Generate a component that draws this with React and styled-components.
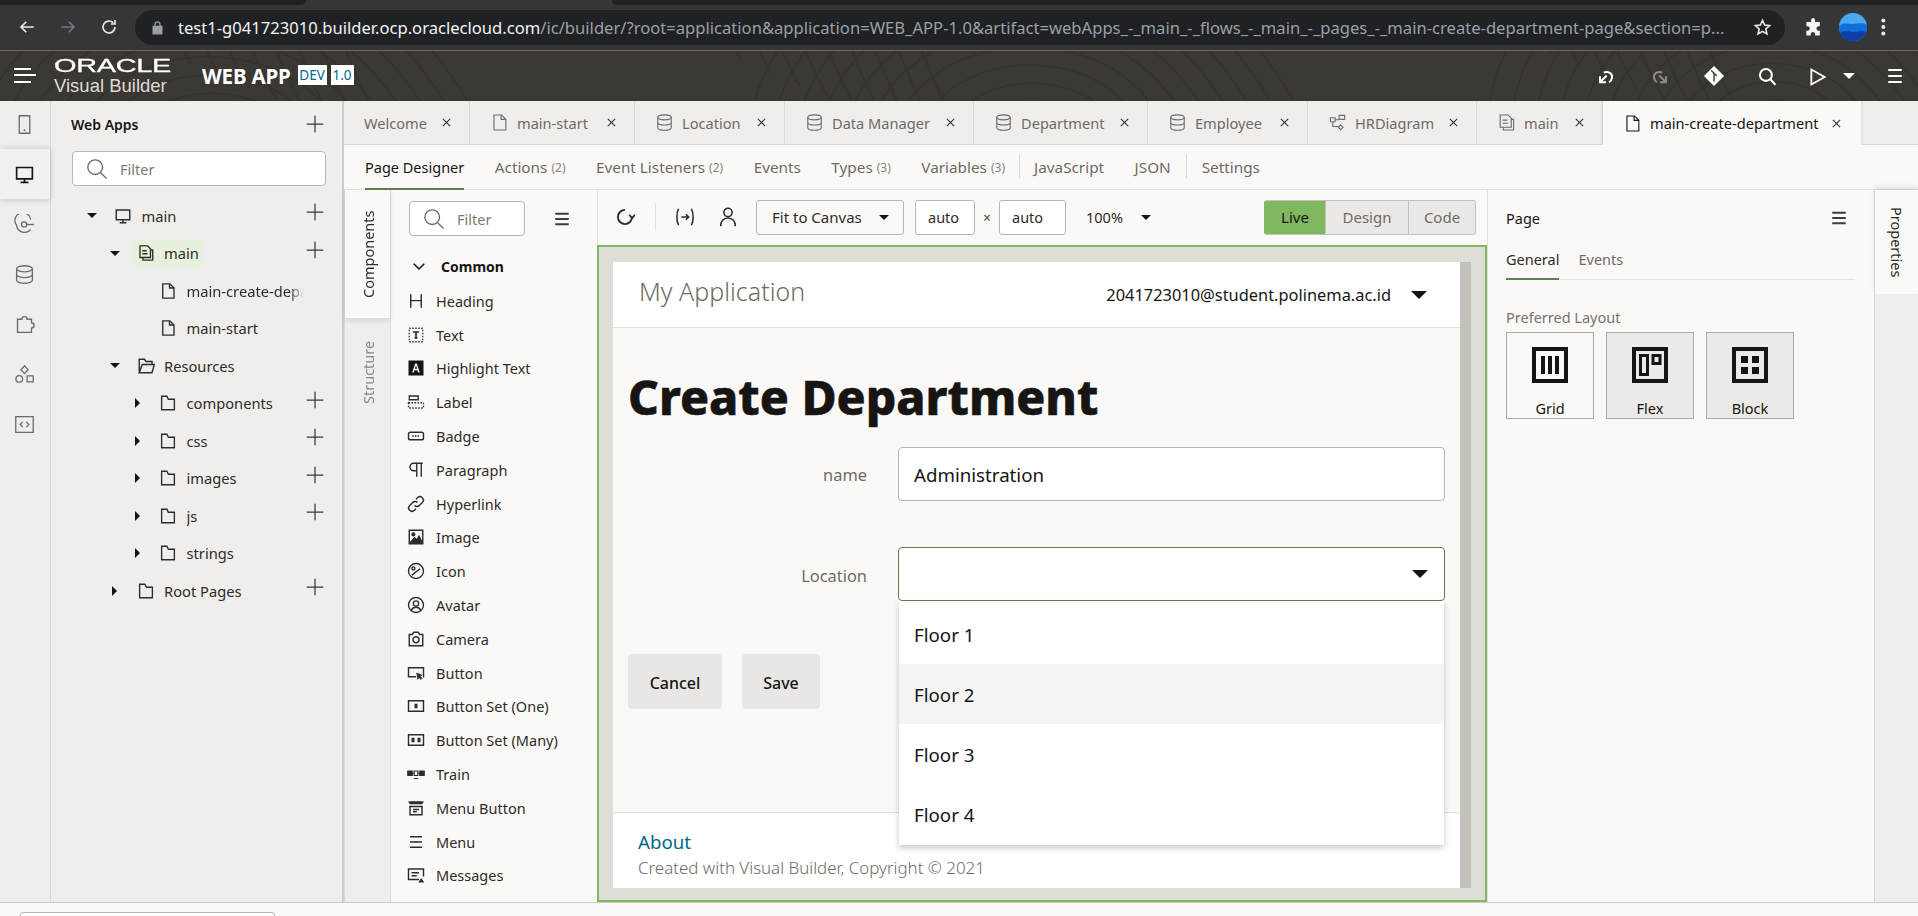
import React from "react";
import styled, { createGlobalStyle } from "styled-components";

const Global = createGlobalStyle`
  html, body { margin: 0; height: 100%; background: #fbf9f8; }
  #root { height: 100%; }
  * { box-sizing: border-box; }
  body { font-family: "Noto Sans", "Open Sans", sans-serif; color: #161513; }
`;

const Ink = "#161513";
const Muted = "#6f6a65";
const Paper = "#fbf9f8";
const Shell = "#f0eeec";
const Rule = "#dcd9d5";
const Green = "#7fb85f";

const Page = styled.div`
  height: 916px;
  display: flex;
  flex-direction: column;
  overflow: hidden;
`;

/* ---------- icons ---------- */
const SvgBase = styled.svg`
  flex: none;
  display: block;
  width: ${(p) => p.$s || 18}px;
  height: ${(p) => p.$s || 18}px;
  color: ${(p) => p.$c || "currentColor"};
`;
const I = ({ s, c, sw = 1.6, children, vb = "0 0 24 24" }) => (
  <SvgBase $s={s} $c={c} viewBox={vb} fill="none" stroke="currentColor" strokeWidth={sw}>
    {children}
  </SvgBase>
);
const PlusIcon = (p) => (<I s={20} sw={1.5} {...p}><path d="M12 2v20M2 12h20" /></I>);
const XIcon = (p) => (<I s={11} sw={2.2} {...p}><path d="M4 4l16 16M20 4L4 20" /></I>);
const PageIcon = (p) => (<I sw={1.8} {...p}><path d="M5 2.5h9.5L20 8v13.5H5zM14 2.5V8h6" /></I>);
const DbIcon = (p) => (
  <I {...p}>
    <ellipse cx="12" cy="5.5" rx="8.5" ry="3.2" />
    <path d="M3.5 5.5v13c0 1.8 3.8 3.2 8.5 3.2s8.5-1.4 8.5-3.2v-13M3.5 12c0 1.8 3.8 3.2 8.5 3.2s8.5-1.4 8.5-3.2" />
  </I>
);
const DiagramIcon = (p) => (
  <I {...p}>
    <path d="M14 3h7v5h-7zM3 6h6v5H3zM6 11v6h7M9 8.5h5" />
    <path d="M16 15l3 3-3 3-3-3z" />
  </I>
);
const MainIcon = (p) => (
  <I sw={1.8} {...p}>
    <path d="M4 2.5h10l4 4V18H4zM7 9h6M7 13h7M18 8h3v13.5H8V18" />
  </I>
);
const MonitorIcon = (p) => (<I {...p} sw={1.9}><path d="M3 4h18v13H3zM12 17v4M7.5 21h9" /></I>);
const FolderIcon = (p) => (<I {...p} sw={1.8}><path d="M3.5 21V3h7l2 4h8v14z" /></I>);
const OpenFolderIcon = (p) => (<I {...p} sw={1.9}><path d="M3 21V3h7l2 3h8v4M3 21l4-11h16l-3 11z" /></I>);
const SearchIcon = ({ s = 22, c = "#6f6a65", sw = 1.5 }) => (
  <I s={s} c={c} sw={sw}><circle cx="10" cy="10" r="8" /><path d="M16 16l6.5 6.5" /></I>
);
const BurgerIcon = ({ s = 18, c = "#3f3b38", sw = 2.4 }) => (
  <I s={s} c={c} sw={sw}><path d="M3 5h18M3 12h18M3 19h18" /></I>
);

const Arrow = styled.span`
  flex: none;
  width: 0;
  height: 0;
  display: block;
  ${(p) =>
    p.$dir === "right"
      ? `border-top: ${p.$u}px solid transparent; border-bottom: ${p.$u}px solid transparent; border-left: ${p.$u}px solid ${p.$c};`
      : `border-left: ${p.$u}px solid transparent; border-right: ${p.$u}px solid transparent; border-top: ${p.$u}px solid ${p.$c};`}
`;

/* ---------- browser chrome ---------- */
const TabEdge = styled.div`
  height: 5px;
  background: #35363a;
  display: flex;
  gap: 306px;
`;
const TabEdgePart = styled.div`
  background: #202124;
  width: ${(p) => (p.$grow ? "auto" : "306px")};
  flex: ${(p) => (p.$grow ? 1 : "none")};
  border-radius: ${(p) => (p.$grow ? "0 0 0 8px" : "0 0 8px 0")};
`;
const BrowserBar = styled.div`
  height: 46px;
  background: #35363a;
  border-bottom: 1px solid #6a6b6d;
  display: flex;
  align-items: center;
  padding-bottom: 1px;
`;
const NavButtons = styled.div`
  width: 135px;
  flex: none;
  display: flex;
  align-items: center;
  padding-left: 18px;
  gap: 23px;
`;
const UrlBar = styled.div`
  width: 1650px;
  height: 35px;
  flex: none;
  border-radius: 18px;
  background: #202124;
  display: flex;
  align-items: center;
  padding-left: 15px;
`;
const UrlText = styled.div`
  width: 1562px;
  margin: 0 13px;
  font-size: 16.6px;
  white-space: nowrap;
  overflow: hidden;
  color: #9aa0a6;
`;
const UrlHost = styled.span`
  color: #f1f3f4;
`;
const BrowserRight = styled.div`
  display: flex;
  align-items: center;
  margin-left: 19px;
`;
const Avatar = styled.svg`
  width: 28px;
  height: 28px;
  margin: 0 -2px 0 16px;
`;

/* ---------- app header ---------- */
const Header = styled.header`
  position: relative;
  height: 50px;
  flex: none;
  background: #3b3733;
  display: flex;
  align-items: center;
  padding-left: 14px;
  overflow: hidden;
  color: #fff;
`;
const Waves = styled.svg`
  position: absolute;
  inset: 0;
  width: 100%;
  height: 100%;
`;
const HeaderSlot = styled.div`
  position: relative;
  display: flex;
  align-items: center;
`;
const Logo = styled.div`
  width: 126px;
  margin-left: 18px;
  height: 40px;
  font-family: "Liberation Sans", sans-serif;
`;
const LogoMark = styled.div`
  font-size: 19px;
  line-height: 18px;
  margin-top: 1px;
  transform: scaleX(1.52);
  transform-origin: left center;
  -webkit-text-stroke: 0.3px #fff;
  letter-spacing: -0.2px;
`;
const LogoSub = styled.div`
  font-size: 18.5px;
  line-height: 21px;
  color: #dedcda;
`;
const AppName = styled.div`
  margin-left: 22px;
  font-size: 20.5px;
  font-weight: 700;
  letter-spacing: -0.2px;
`;
const VersionTag = styled.span`
  margin-left: ${(p) => p.$ml}px;
  width: ${(p) => p.$w}px;
  height: 20px;
  background: #fff;
  color: #00688c;
  font-size: 13.5px;
  line-height: 20px;
  text-align: center;
  margin-bottom: 3px;
`;
const HeaderTools = styled.div`
  position: relative;
  margin-left: auto;
  display: flex;
  align-items: center;
  height: 100%;
`;
const HeaderTool = styled.span`
  position: absolute;
  left: ${(p) => p.$x}px;
  top: ${(p) => p.$y}px;
  display: block;
`;

/* ---------- shell ---------- */
const Body = styled.div`
  flex: 1;
  min-height: 0;
  display: flex;
  background: ${Shell};
  border-bottom: 1px solid #cfccc7;
`;
const Rail = styled.nav`
  width: 51px;
  flex: none;
  border-right: 1px solid ${Rule};
  display: flex;
  flex-direction: column;
`;
const RailItem = styled.div`
  height: 50px;
  display: flex;
  align-items: center;
  justify-content: center;
  padding-right: 1px;
  margin-top: ${(p) => (p.$first ? "-2px" : 0)};
  color: ${(p) => (p.$active ? Ink : Muted)};
  background: ${(p) => (p.$active ? "#f3f1ef" : "transparent")};
  box-shadow: ${(p) => (p.$active ? "0 2px 6px rgba(0,0,0,.13), 0 -2px 6px rgba(0,0,0,.07)" : "none")};
`;
const NavPanel = styled.aside`
  width: 293px;
  flex: none;
  border-right: 2px solid #cfccc7;
  display: flex;
  flex-direction: column;
`;
const NavHead = styled.div`
  height: 50px;
  padding: 0 17px 4px 20px;
  display: flex;
  align-items: center;
  justify-content: space-between;
  font-size: 14px;
  font-weight: 600;
`;
const Filter = styled.div`
  height: 35px;
  width: ${(p) => p.$w}px;
  flex: none;
  margin-left: ${(p) => p.$ml || 0}px;
  background: #fff;
  border: 1px solid #b9b6b1;
  border-radius: 4px;
  display: flex;
  align-items: center;
  padding-left: 13px;
  gap: 12px;
  font-size: 14.5px;
  color: #7d7873;
`;
const Tree = styled.div`
  padding-top: 11px;
`;
const TreeRow = styled.div`
  height: 37.5px;
  display: flex;
  align-items: center;
  padding-left: ${(p) => 33 + p.$depth * 22.5}px;
  font-size: 14.7px;
  color: #2f2b28;
`;
const ArrowSlot = styled.span`
  width: 16px;
  flex: none;
  margin-right: 14px;
  display: flex;
  justify-content: center;
`;
const TreeLabel = styled.span`
  display: flex;
  align-items: center;
  gap: 9.5px;
  height: 28px;
  margin-left: -4px;
  padding: 0 4px;
  background: ${(p) => (p.$sel ? "#e6f2de" : "transparent")};
`;
const Clipped = styled.span`
  display: block;
  white-space: nowrap;
  overflow: hidden;
  max-width: ${(p) => p.$max || 200}px;
  ${(p) => p.$max && "mask-image: linear-gradient(to right, #000 88%, transparent);"}
`;
const TreeAdd = styled.span`
  margin-left: auto;
  margin-right: 17px;
  margin-bottom: 7px;
  color: #2c3b45;
`;

/* ---------- main column ---------- */
const Main = styled.main`
  flex: 1;
  min-width: 0;
  display: flex;
  flex-direction: column;
`;
const Tabs = styled.div`
  height: 44px;
  flex: none;
  display: flex;
  background: ${Shell};
`;
const Tab = styled.div`
  width: ${(p) => p.$w}px;
  flex: none;
  padding-left: 20px;
  display: flex;
  align-items: center;
  font-size: 14.6px;
  color: ${(p) => (p.$active ? Ink : Muted)};
  background: ${(p) => (p.$active ? Paper : "transparent")};
  border-right: 1px solid ${(p) => (p.$active ? "transparent" : Rule)};
  border-bottom: ${(p) => (p.$active ? "none" : `1px solid ${Rule}`)};
  box-shadow: ${(p) => (p.$active ? "0 -1px 4px rgba(0,0,0,.12)" : "none")};
`;
const TabFiller = styled.div`
  flex: 1;
  border-bottom: 1px solid ${Rule};
`;
const TabLabel = styled.span`
  margin-left: ${(p) => (p.$icon ? 8 : 0)}px;
  white-space: nowrap;
`;
const TabClose = styled.span`
  margin-left: auto;
  margin-right: ${(p) => p.$mr}px;
  color: #2f2b28;
`;
const SubTabs = styled.div`
  height: 45px;
  flex: none;
  display: flex;
  gap: 30.5px;
  padding-left: 21px;
  background: ${Paper};
  border-bottom: 1px solid #e4e1dd;
`;
const SubTab = styled.div`
  display: flex;
  align-items: center;
  gap: 4px;
  font-size: ${(p) => (p.$active ? 14.5 : 15.3)}px;
  padding-top: 1px;
  color: ${(p) => (p.$active ? Ink : Muted)};
  border-bottom: 2px solid ${(p) => (p.$active ? "#5f7d4f" : "transparent")};
  height: 45px;
`;
const Count = styled.span`
  font-size: 12px;
  color: #8a8580;
`;
const SubDivider = styled.span`
  width: 1px;
  height: 24px;
  margin: 9px ${(p) => (p.$tight ? -16.5 : -15.5)}px 0;
  background: #dcd9d5;
`;
const Workspace = styled.div`
  flex: 1;
  min-height: 0;
  display: flex;
  background: ${Paper};
`;
const SideStrip = styled.div`
  width: ${(p) => p.$w}px;
  flex: none;
  background: ${Shell};
  border-left: 1px solid ${Rule};
  border-right: ${(p) => (p.$right ? "none" : `1px solid ${Rule}`)};
  display: flex;
  flex-direction: column;
`;
const VTab = styled.div`
  height: ${(p) => p.$h}px;
  writing-mode: vertical-rl;
  ${(p) => (p.$right ? "" : "transform: rotate(180deg);")}
  display: flex;
  align-items: center;
  justify-content: center;
  font-size: 14.5px;
  color: ${(p) => (p.$active ? "#2f2b28" : "#8a8580")};
  background: ${(p) => (p.$active ? Paper : "transparent")};
  box-shadow: ${(p) => (p.$active ? "0 -3px 5px rgba(0,0,0,.1)" : "none")};
`;
const Palette = styled.section`
  width: 206px;
  flex: none;
  padding-top: 11px;
  background: ${Paper};
`;
const PaletteHead = styled.div`
  display: flex;
  align-items: center;
  height: 35px;
`;
const PaletteBurger = styled.span`
  margin-left: 28px;
`;
const GroupTitle = styled.div`
  height: 36px;
  margin-top: 12px;
  padding-left: 21px;
  display: flex;
  align-items: center;
  gap: 15px;
  font-size: 14px;
  font-weight: 700;
`;
const CompRow = styled.div`
  height: 33.8px;
  display: flex;
  align-items: center;
  gap: 11px;
  padding-left: 16px;
  font-size: 14.5px;
  color: #2f2b28;
  white-space: nowrap;
`;

/* ---------- centre ---------- */
const Centre = styled.section`
  width: 890px;
  flex: none;
  display: flex;
  flex-direction: column;
`;
const Toolbar = styled.div`
  height: 55px;
  flex: none;
  display: flex;
  align-items: center;
  padding-left: 17px;
  padding-bottom: 1px;
  font-size: 14.5px;
  border-left: 1px solid #e4e1dd;
`;
const ToolDivider = styled.span`
  width: 1px;
  height: 28px;
  margin: 0 18px 0 20px;
  background: #e4e1dd;
`;
const ToolIcon = styled.span`
  margin-right: ${(p) => p.$mr || 0}px;
  display: block;
`;
const ToolBox = styled.div`
  height: 35px;
  width: ${(p) => p.$w}px;
  flex: none;
  margin-left: ${(p) => p.$ml || 0}px;
  border: 1px solid #b9b6b1;
  border-radius: 3px;
  background: ${(p) => (p.$white ? "#fff" : Paper)};
  display: flex;
  align-items: center;
  padding-left: ${(p) => p.$pl || 12}px;
  color: #2f2b28;
`;
const FitLabel = styled.span`
  font-size: 15px;
`;
const BoxArrow = styled.span`
  margin-left: auto;
  margin-right: 14px;
`;
const Times = styled.span`
  width: 24px;
  text-align: center;
  color: #4a4642;
  font-size: 14px;
`;
const Zoom = styled.span`
  margin-left: 20px;
  width: 54.5px;
  color: #2f2b28;
`;
const Segments = styled.div`
  display: flex;
  height: 35px;
  margin-left: 113.5px;
  border-radius: 3px;
  overflow: hidden;
  border: 1px solid #c4c1bc;
  border-left: none;
  font-size: 15px;
`;
const Segment = styled.span`
  width: ${(p) => p.$w}px;
  display: flex;
  align-items: center;
  justify-content: center;
  background: ${(p) => (p.$on ? Green : "#ebe9e7")};
  color: ${(p) => (p.$on ? Ink : Muted)};
  border-left: 1px solid ${(p) => (p.$on ? Green : "#c4c1bc")};
`;
const Canvas = styled.div`
  flex: 1;
  min-height: 0;
  background: #e0ddd8;
  border: 2px solid ${Green};
  padding: 15px 14px 12px 14px;
  display: flex;
`;
const Preview = styled.div`
  width: 847px;
  flex: none;
  display: flex;
  flex-direction: column;
  background: ${Paper};
`;
const FakeScroll = styled.div`
  flex: 1;
  background: #c5c2bc;
`;
const PreviewHead = styled.div`
  height: 66px;
  flex: none;
  background: #fff;
  border-bottom: 1px solid #e4e1dd;
  display: flex;
  align-items: center;
  padding: 0 33px 0 26px;
`;
const AppTitle = styled.div`
  font-size: 25px;
  font-weight: 300;
  color: #6f6a65;
  margin-bottom: 8px;
`;
const UserBox = styled.div`
  margin-left: auto;
  display: flex;
  align-items: center;
  gap: 20px;
  font-size: 16.4px;
  color: #161513;
`;
const PreviewBody = styled.div`
  flex: 1;
  min-height: 0;
  padding: 39px 15px 0 15px;
`;
const Heading = styled.h1`
  margin: 0 0 20px;
  height: 60px;
  font-size: 48px;
  line-height: 60px;
  font-weight: 800;
  -webkit-text-stroke: 0.6px #161513;
  color: #161513;
`;
const FormRow = styled.div`
  display: grid;
  grid-template-columns: 239px 1fr;
  column-gap: 31px;
  align-items: center;
  margin-bottom: ${(p) => p.$mb}px;
`;
const FieldLabel = styled.label`
  text-align: right;
  font-size: 16.4px;
  color: #6f6a65;
  padding-top: ${(p) => p.$pt || 0}px;
`;
const InputBox = styled.div`
  position: relative;
  height: 54px;
  background: #fff;
  border: 1px solid ${(p) => (p.$focus ? "#5f7d4f" : "#b9b6b1")};
  border-radius: 4px;
  padding: 0 14px 0 15px;
  display: flex;
  align-items: center;
  justify-content: space-between;
  font-size: 18.7px;
  color: #161513;
`;
const SelectArrow = styled.span`
  margin-right: 2px;
`;
const Dropdown = styled.div`
  position: absolute;
  left: 0;
  right: 0;
  top: calc(100% + 1px);
  z-index: 3;
  background: #fff;
  padding: 3px 0 1px;
  box-shadow: 0 3px 6px rgba(0, 0, 0, 0.22);
`;
const Option = styled.div`
  height: 60px;
  display: flex;
  align-items: center;
  padding-left: 15px;
  font-size: 18.7px;
  background: ${(p) => (p.$hover ? "#f5f5f5" : "#fff")};
`;
const Actions = styled.div`
  display: flex;
  gap: 20px;
`;
const Btn = styled.div`
  height: 55px;
  width: ${(p) => p.$w}px;
  border-radius: 4px;
  background: #e9e7e5;
  display: flex;
  align-items: center;
  justify-content: center;
  padding-top: 2px;
  font-size: 16px;
  font-weight: 500;
  color: #161513;
`;
const PreviewFoot = styled.div`
  height: 76px;
  flex: none;
  background: #fff;
  border-top: 1px solid #e4e1dd;
  padding: 16px 26px 0 25px;
`;
const FootLink = styled.div`
  font-size: 18.7px;
  line-height: 26px;
  color: #00688c;
`;
const FootNote = styled.div`
  font-size: 16.9px;
  line-height: 25px;
  color: #6f6a65;
  font-weight: 300;
`;

/* ---------- properties ---------- */
const Props = styled.section`
  width: 387px;
  flex: none;
  padding: 0 19px 0 18px;
  border-left: 1px solid #e4e1dd;
`;
const PropsHead = styled.div`
  height: 56px;
  display: flex;
  align-items: center;
  justify-content: space-between;
  font-size: 14.5px;
  padding: 0 7px 0 0;
`;
const PropTabs = styled.div`
  display: flex;
  gap: 19px;
  height: 34px;
  border-bottom: 1px solid #e4e1dd;
`;
const PropTab = styled.div`
  height: 34px;
  font-size: 14.5px;
  line-height: 26px;
  color: ${(p) => (p.$active ? "#2f2b28" : Muted)};
  border-bottom: 2px solid ${(p) => (p.$active ? "#5f7d4f" : "transparent")};
`;
const PropLabel = styled.div`
  margin-top: 27px;
  font-size: 14.5px;
  line-height: 20px;
  color: #77726d;
`;
const LayoutCards = styled.div`
  display: flex;
  gap: 12px;
  margin-top: 5px;
`;
const LayoutCard = styled.div`
  width: 88px;
  height: 87px;
  border: 1px solid #aeaba6;
  background: ${(p) => (p.$on ? "#ebeae8" : Paper)};
  display: flex;
  flex-direction: column;
  align-items: center;
  padding-top: 13px;
  gap: 14px;
  font-size: 14.5px;
  line-height: 20px;
`;

/* ---------- bottom ---------- */
const BottomBar = styled.div`
  height: 13px;
  flex: none;
  padding: 9px 0 0 20px;
  overflow: hidden;
`;
const BottomBox = styled.div`
  width: 255px;
  height: 20px;
  border: 1px solid #b9b6b1;
  border-radius: 3px;
  background: #fff;
`;

/* ---------- component palette glyphs ---------- */
const G = {
  Heading: <I sw={1.9}><path d="M5 3v18M19 3v18M5 11.5h14" /></I>,
  Text: <I sw={1.7}><path d="M3 3h18v18H3z" strokeDasharray="2 2" /><path d="M8 8h8M12 8v8M10 16h4" strokeWidth="2.3" /></I>,
  Highlight: <I sw={0}><rect x="2" y="2" width="20" height="20" fill="#161513" /><path d="M7 18l4-12h2l4 12h-2.2l-.9-3h-4l-.9 3zM10.5 13h3l-1.5-4.8z" fill="#fff" /></I>,
  Label: <I sw={1.7}><path d="M3 4h12v5H3z" /><path d="M2 13h20v7H2z" strokeDasharray="2 2" /></I>,
  Badge: <I sw={1.9}><rect x="2" y="7" width="20" height="10" rx="2.5" /><path d="M7 12h10" strokeDasharray="2 1.5" /></I>,
  Paragraph: <I sw={1.9}><path d="M21 3H9a5 5 0 000 10h4M13 3v18M19 3v18" /></I>,
  Hyperlink: <I sw={1.9}><path d="M10 14a4.5 4.5 0 006.4 0l4-4a4.5 4.5 0 00-6.4-6.4l-2 2M14 10a4.5 4.5 0 00-6.4 0l-4 4a4.5 4.5 0 006.4 6.4l2-2" /></I>,
  Image: <I sw={1.9}><path d="M3 3h18v18H3z" /><circle cx="8.5" cy="8.5" r="1.8" fill="currentColor" /><path d="M5 19l5-6 3 3 3-5 4 8z" fill="currentColor" /></I>,
  Icon: <I sw={1.8}><circle cx="12" cy="12" r="10" /><circle cx="8.5" cy="8.5" r="2" /><path d="M6.5 17.5l11-8.5" /></I>,
  Avatar: <I sw={1.8}><circle cx="12" cy="12" r="10" /><circle cx="12" cy="10" r="3.5" /><path d="M5.5 19c1.5-3 3.5-4 6.5-4s5 1 6.5 4" /></I>,
  Camera: <I sw={1.9}><path d="M3 6h4l2-3h6l2 3h4v15H3z" /><circle cx="12" cy="13" r="4" /></I>,
  Button: <I sw={1.9}><path d="M12 17H2V5h20v12h-1" /><path d="M13 12l7 3-3 1 3 3-1.5 1.5-3-3-1 3z" fill="currentColor" strokeWidth="1" /></I>,
  SetOne: <I sw={1.9}><path d="M2 5h20v14H2z" /><path d="M10 9h4v6h-4z" fill="currentColor" stroke="none" /></I>,
  SetMany: <I sw={1.9}><path d="M2 5h20v14H2z" /><path d="M6 9h4v6H6zM14 9h4v6h-4z" fill="currentColor" stroke="none" /></I>,
  Train: <I sw={1.5}><path d="M1 8h6v6H1zM17 8h6v6h-6z" fill="currentColor" /><path d="M9.5 8h5v6h-5zM7 11h3M14 11h3M9 18h6" /></I>,
  MenuButton: <I sw={1.9}><path d="M2 4h20M4 4v2h16V4M4 10h16v11H4zM8 14h8M8 17h5" /></I>,
  Menu: <I sw={1.9}><path d="M4 5h16M4 12h16M4 19h16" /></I>,
  Messages: <I sw={1.9}><path d="M16 18H2V4h20v10M6 9h10M6 13h7" /><path d="M19 16l4 6h-8z" fill="currentColor" stroke="none" /></I>,
};

const components = [
  ["Heading", G.Heading], ["Text", G.Text], ["Highlight Text", G.Highlight], ["Label", G.Label],
  ["Badge", G.Badge], ["Paragraph", G.Paragraph], ["Hyperlink", G.Hyperlink], ["Image", G.Image],
  ["Icon", G.Icon], ["Avatar", G.Avatar], ["Camera", G.Camera], ["Button", G.Button],
  ["Button Set (One)", G.SetOne], ["Button Set (Many)", G.SetMany], ["Train", G.Train],
  ["Menu Button", G.MenuButton], ["Menu", G.Menu], ["Messages", G.Messages],
];

const tree = [
  { label: "main", depth: 0, arrow: "down", icon: <MonitorIcon />, add: true },
  { label: "main", depth: 1, arrow: "down", icon: <MainIcon />, add: true, sel: true },
  { label: "main-create-department", depth: 2, icon: <PageIcon />, max: 117 },
  { label: "main-start", depth: 2, icon: <PageIcon /> },
  { label: "Resources", depth: 1, arrow: "down", icon: <OpenFolderIcon /> },
  { label: "components", depth: 2, arrow: "right", icon: <FolderIcon />, add: true },
  { label: "css", depth: 2, arrow: "right", icon: <FolderIcon />, add: true },
  { label: "images", depth: 2, arrow: "right", icon: <FolderIcon />, add: true },
  { label: "js", depth: 2, arrow: "right", icon: <FolderIcon />, add: true },
  { label: "strings", depth: 2, arrow: "right", icon: <FolderIcon /> },
  { label: "Root Pages", depth: 1, arrow: "right", icon: <FolderIcon />, add: true },
];

const tabs = [
  { label: "Welcome", w: 126 },
  { label: "main-start", w: 165, Icon: PageIcon },
  { label: "Location", w: 150, Icon: DbIcon },
  { label: "Data Manager", w: 189, Icon: DbIcon },
  { label: "Department", w: 174, Icon: DbIcon },
  { label: "Employee", w: 160, Icon: DbIcon },
  { label: "HRDiagram", w: 169, Icon: DiagramIcon },
  { label: "main", w: 126, Icon: MainIcon },
  { label: "main-create-department", w: 258, Icon: PageIcon, active: true },
];

const subTabs = [
  { label: "Page Designer", active: true },
  { label: "Actions", count: 2 },
  { label: "Event Listeners", count: 2 },
  { label: "Events" },
  { label: "Types", count: 3 },
  { label: "Variables", count: 3 },
  { divider: true, tight: true },
  { label: "JavaScript" },
  { label: "JSON" },
  { divider: true },
  { label: "Settings" },
];

const railIcons = [
  <I s={21} sw={1.5}><path d="M6 2h12v20H6z" /><path d="M11 18.5h2" strokeWidth="2" /></I>,
  <I s={21} sw={1.9}><path d="M3 4h18v13H3zM12 17v4M7.5 21h9" /></I>,
  <I s={21} sw={1.5}><path d="M19 6.5A9 9 0 103 13M19 17.5A9 9 0 013 13" /><circle cx="11.5" cy="12" r="3" /><path d="M14.5 12H23" /></I>,
  <I s={21} sw={1.5}><ellipse cx="12" cy="5.5" rx="9" ry="3.5" /><path d="M3 5.5v13c0 1.9 4 3.5 9 3.5s9-1.6 9-3.5v-13M3 12c0 1.9 4 3.5 9 3.5s9-1.6 9-3.5" /></I>,
  <I s={21} sw={1.5}><path d="M4 6h5a3 3 0 116 0h5v4a3 3 0 010 6v5H4z" /></I>,
  <I s={21} sw={1.5}><path d="M12 2l4 4.5-4 4.5-4-4.5z" /><circle cx="6" cy="17" r="3.8" /><path d="M15 13.5h7v7h-7z" /></I>,
  <I s={21} sw={1.5}><path d="M2 3h20v18H2zM10 9l-3 3 3 3M14 9l3 3-3 3" /></I>,
];

const wavePaths = (() => {
  const out = [];
  const centres = [[220, 120], [620, -40], [1040, 110], [1400, -60], [1780, 90], [40, -50]];
  centres.forEach(([cx, cy]) => {
    for (let r = 30; r < 300; r += 24) {
      out.push(`M${cx - r} ${cy}C${cx - r} ${cy - r * 0.6} ${cx - r * 0.3} ${cy - r * 0.9} ${cx + r * 0.3} ${cy - r * 0.7}S${cx + r} ${cy + r * 0.2} ${cx + r * 1.2} ${cy + r * 0.5}`);
    }
  });
  return out;
})();

const layoutIcon = {
  Grid: <path d="M3 3h32v32H3zM12 10v18M19 10v18M26 10v18" />,
  Flex: <><path d="M3 3h32v32H3z" /><path d="M9.5 9.5h7v19h-7zM22 9.5h7v8h-7z" strokeWidth="3" /></>,
  Block: <><path d="M3 3h32v32H3z" /><path d="M10 10h7v7h-7zM21 10h7v7h-7zM10 21h7v7h-7zM21 21h7v7h-7z" fill="#161513" stroke="none" /></>,
};

export default function App() {
  return (
    <Page>
      <Global />
      <TabEdge>
        <TabEdgePart />
        <TabEdgePart $grow />
      </TabEdge>
      <BrowserBar>
        <NavButtons>
          <I s={18} c="#e8eaed" sw={2.2}><path d="M21 12H4M11 5l-7 7 7 7" /></I>
          <I s={18} c="#74777b" sw={2.2}><path d="M3 12h17M13 5l7 7-7 7" /></I>
          <I s={18} c="#e8eaed" sw={2.2}><path d="M20 12a8 8 0 11-2.5-5.8M20 2.5V8h-5.5" /></I>
        </NavButtons>
        <UrlBar>
          <I s={15} c="#9aa0a6" sw={2}>
            <path d="M5 10h14v12H5z" fill="currentColor" />
            <path d="M8 10V7a4 4 0 018 0v3" />
          </I>
          <UrlText>
            <UrlHost>test1-g041723010.builder.ocp.oraclecloud.com</UrlHost>
            /ic/builder/?root=application&amp;application=WEB_APP-1.0&amp;artifact=webApps_-_main_-_flows_-_main_-_pages_-_main-create-department-page&amp;section=p...
          </UrlText>
          <I s={19} c="#e8eaed" sw={2}><path d="M12 3l2.7 6 6.3.6-4.8 4.2 1.4 6.4L12 16.9l-5.6 3.3 1.4-6.4L3 9.6 9.3 9z" /></I>
        </UrlBar>
        <BrowserRight>
          <I s={19} c="#f1f3f4" sw={0}><path d="M9 2.5a2.5 2.5 0 015 0V5h6v5.5h-2a2.8 2.8 0 000 5.5h2v6h-6v-2a2.8 2.8 0 00-5.5 0v2H3v-6h2a2.8 2.8 0 000-5.5H3V5h6z" fill="currentColor" /></I>
          <Avatar viewBox="0 0 28 28">
            <circle cx="14" cy="14" r="14" fill="#48a8f0" />
            <path d="M0 13c5-4 9-2 14-2s9-2 14 1v2a14 14 0 01-28 0z" fill="#0f6fd8" />
            <path d="M1 20c5-3 9-1 13-1s8-2 13 0a14 14 0 01-26 1z" fill="#0a3fa6" />
          </Avatar>
          <I s={22} c="#e8eaed" sw={0}>
            <circle cx="20" cy="5" r="2.2" fill="currentColor" />
            <circle cx="20" cy="12" r="2.2" fill="currentColor" />
            <circle cx="20" cy="19" r="2.2" fill="currentColor" />
          </I>
        </BrowserRight>
      </BrowserBar>

      <Header>
        <Waves viewBox="0 0 1918 50" preserveAspectRatio="none" fill="none" stroke="#312d2a" strokeWidth="1.6" opacity="0.55">
          {wavePaths.map((d) => <path key={d} d={d} />)}
        </Waves>
        <HeaderSlot>
          <I s={22} c="#fff" sw={2.2} vb="0 0 22 22"><path d="M0 4h17M0 10h22M0 17h17" /></I>
          <Logo>
            <LogoMark>ORACLE</LogoMark>
            <LogoSub>Visual Builder</LogoSub>
          </Logo>
          <AppName>WEB APP</AppName>
          <VersionTag $ml={7} $w={29}>DEV</VersionTag>
          <VersionTag $ml={4} $w={23}>1.0</VersionTag>
        </HeaderSlot>
        <HeaderTools>
          <HeaderTool $x={-321} $y={17}><I s={18} c="#fff" sw={2.6}><path d="M4 19l9-9M4 11v8h8M9 6c6-2 12 1 11 7-.4 3-2 5-4 6" /></I></HeaderTool>
          <HeaderTool $x={-267} $y={17}><I s={18} c="#8f8b87" sw={2.6}><path d="M20 19l-9-9M20 11v8h-8M15 6C9 4 3 7 4 13c.4 3 2 5 4 6" /></I></HeaderTool>
          <HeaderTool $x={-215} $y={14}><I s={22} c="#fff" sw={0}><path d="M12 1l11 11-11 11L1 12z" fill="currentColor" /><path d="M9 6l3 3v9M12 9l3 3" stroke="#3b3733" strokeWidth="1.5" /></I></HeaderTool>
          <HeaderTool $x={-160} $y={16}><I s={19} c="#fff" sw={2.6}><circle cx="10" cy="10" r="7.5" /><path d="M15.5 15.5l6.5 7" /></I></HeaderTool>
          <HeaderTool $x={-110} $y={16}><I s={20} c="#fff" sw={2.2}><path d="M4 3l16 9-16 9z" /></I></HeaderTool>
          <HeaderTool $x={-75} $y={22}><Arrow $u={6} $c="#fff" /></HeaderTool>
          <HeaderTool $x={-32} $y={16}><I s={18} c="#fff" sw={2.4}><path d="M3 4h18M3 12h18M3 20h18" /></I></HeaderTool>
        </HeaderTools>
      </Header>

      <Body>
        <Rail>
          {railIcons.map((ic, i) => (
            <RailItem key={i} $active={i === 1} $first={i === 0}>{ic}</RailItem>
          ))}
        </Rail>
        <NavPanel>
          <NavHead>
            Web Apps
            <PlusIcon c="#2c3b45" />
          </NavHead>
          <Filter $w={254} $ml={21}>
            <SearchIcon />
            Filter
          </Filter>
          <Tree>
            {tree.map((r, i) => (
              <TreeRow key={i} $depth={r.depth}>
                <ArrowSlot>
                  {r.arrow && <Arrow $dir={r.arrow} $u={5} $c={Ink} />}
                </ArrowSlot>
                <TreeLabel $sel={r.sel}>
                  {r.icon}
                  <Clipped $max={r.max}>{r.label}</Clipped>
                </TreeLabel>
                {r.add && <TreeAdd><PlusIcon /></TreeAdd>}
              </TreeRow>
            ))}
          </Tree>
        </NavPanel>

        <Main>
          <Tabs>
            {tabs.map((t) => (
              <Tab key={t.label} $w={t.w} $active={t.active}>
                {t.Icon && <t.Icon s={19} sw={1.4} c={t.active ? Ink : Muted} />}
                <TabLabel $icon={!!t.Icon}>{t.label}</TabLabel>
                <TabClose $mr={t.active ? 18 : 17}><XIcon /></TabClose>
              </Tab>
            ))}
            <TabFiller />
          </Tabs>
          <SubTabs>
            {subTabs.map((t, i) =>
              t.divider ? (
                <SubDivider key={i} $tight={t.tight} />
              ) : (
                <SubTab key={i} $active={t.active}>
                  {t.label}
                  {t.count && <Count>({t.count})</Count>}
                </SubTab>
              )
            )}
          </SubTabs>
          <Workspace>
            <SideStrip $w={47}>
              <VTab $h={128} $active>Components</VTab>
              <VTab $h={108}>Structure</VTab>
            </SideStrip>
            <Palette>
              <PaletteHead>
                <Filter $w={116} $ml={18}>
                  <SearchIcon />
                  Filter
                </Filter>
                <PaletteBurger><BurgerIcon /></PaletteBurger>
              </PaletteHead>
              <GroupTitle>
                <I s={14} c={Ink} sw={2.6}><path d="M3 8l9 9 9-9" /></I>
                Common
              </GroupTitle>
              {components.map(([name, glyph]) => (
                <CompRow key={name}>{glyph}{name}</CompRow>
              ))}
            </Palette>
            <Centre>
              <Toolbar>
                <I s={20} c="#2f2b28" sw={2.2}><path d="M12 3.5a8.5 8.5 0 108.5 8.5" /><path d="M17 9.5l3.5 3.5 3.5-3.5" /></I>
                <ToolDivider />
                <ToolIcon $mr={20.5}><I s={22} c="#2f2b28" sw={1.7}><path d="M5 3C2.5 8 2.5 16 5 21M19 3c2.5 5 2.5 13 0 18M8 12h8M13 9l3 3-3 3" /></I></ToolIcon>
                <ToolIcon $mr={17.5}><I s={22} c="#2f2b28" sw={1.7}><circle cx="12" cy="7" r="4.5" /><path d="M4 22c0-5 3-9 8-9s8 4 8 9" /></I></ToolIcon>
                <ToolBox $w={148} $pl={15}>
                  <FitLabel>Fit to Canvas</FitLabel>
                  <BoxArrow><Arrow $u={5} $c={Ink} /></BoxArrow>
                </ToolBox>
                <ToolBox $w={60} $ml={11} $white>auto</ToolBox>
                <Times>×</Times>
                <ToolBox $w={67} $white>auto</ToolBox>
                <Zoom>100%</Zoom>
                <Arrow $u={5} $c={Ink} />
                <Segments>
                  <Segment $w={61} $on>Live</Segment>
                  <Segment $w={83}>Design</Segment>
                  <Segment $w={67}>Code</Segment>
                </Segments>
              </Toolbar>
              <Canvas>
                <Preview>
                  <PreviewHead>
                    <AppTitle>My Application</AppTitle>
                    <UserBox>
                      2041723010@student.polinema.ac.id
                      <Arrow $u={8} $c={Ink} />
                    </UserBox>
                  </PreviewHead>
                  <PreviewBody>
                    <Heading>Create Department</Heading>
                    <FormRow $mb={46}>
                      <FieldLabel>name</FieldLabel>
                      <InputBox>Administration</InputBox>
                    </FormRow>
                    <FormRow $mb={53}>
                      <FieldLabel $pt={2}>Location</FieldLabel>
                      <InputBox $focus>
                        <span />
                        <SelectArrow><Arrow $u={8} $c={Ink} /></SelectArrow>
                        <Dropdown>
                          <Option>Floor 1</Option>
                          <Option $hover>Floor 2</Option>
                          <Option>Floor 3</Option>
                          <Option>Floor 4</Option>
                        </Dropdown>
                      </InputBox>
                    </FormRow>
                    <Actions>
                      <Btn $w={94}>Cancel</Btn>
                      <Btn $w={78}>Save</Btn>
                    </Actions>
                  </PreviewBody>
                  <PreviewFoot>
                    <FootLink>About</FootLink>
                    <FootNote>Created with Visual Builder, Copyright © 2021</FootNote>
                  </PreviewFoot>
                </Preview>
                <FakeScroll />
              </Canvas>
            </Centre>
            <Props>
              <PropsHead>
                Page
                <BurgerIcon />
              </PropsHead>
              <PropTabs>
                <PropTab $active>General</PropTab>
                <PropTab>Events</PropTab>
              </PropTabs>
              <PropLabel>Preferred Layout</PropLabel>
              <LayoutCards>
                {["Grid", "Flex", "Block"].map((n) => (
                  <LayoutCard key={n} $on={n !== "Grid"}>
                    <I s={38} c="#161513" sw={4} vb="0 0 38 38">{layoutIcon[n]}</I>
                    {n}
                  </LayoutCard>
                ))}
              </LayoutCards>
            </Props>
            <SideStrip $w={44} $right>
              <VTab $h={104} $active $right>Properties</VTab>
            </SideStrip>
          </Workspace>
        </Main>
      </Body>
      <BottomBar>
        <BottomBox />
      </BottomBar>
    </Page>
  );
}
